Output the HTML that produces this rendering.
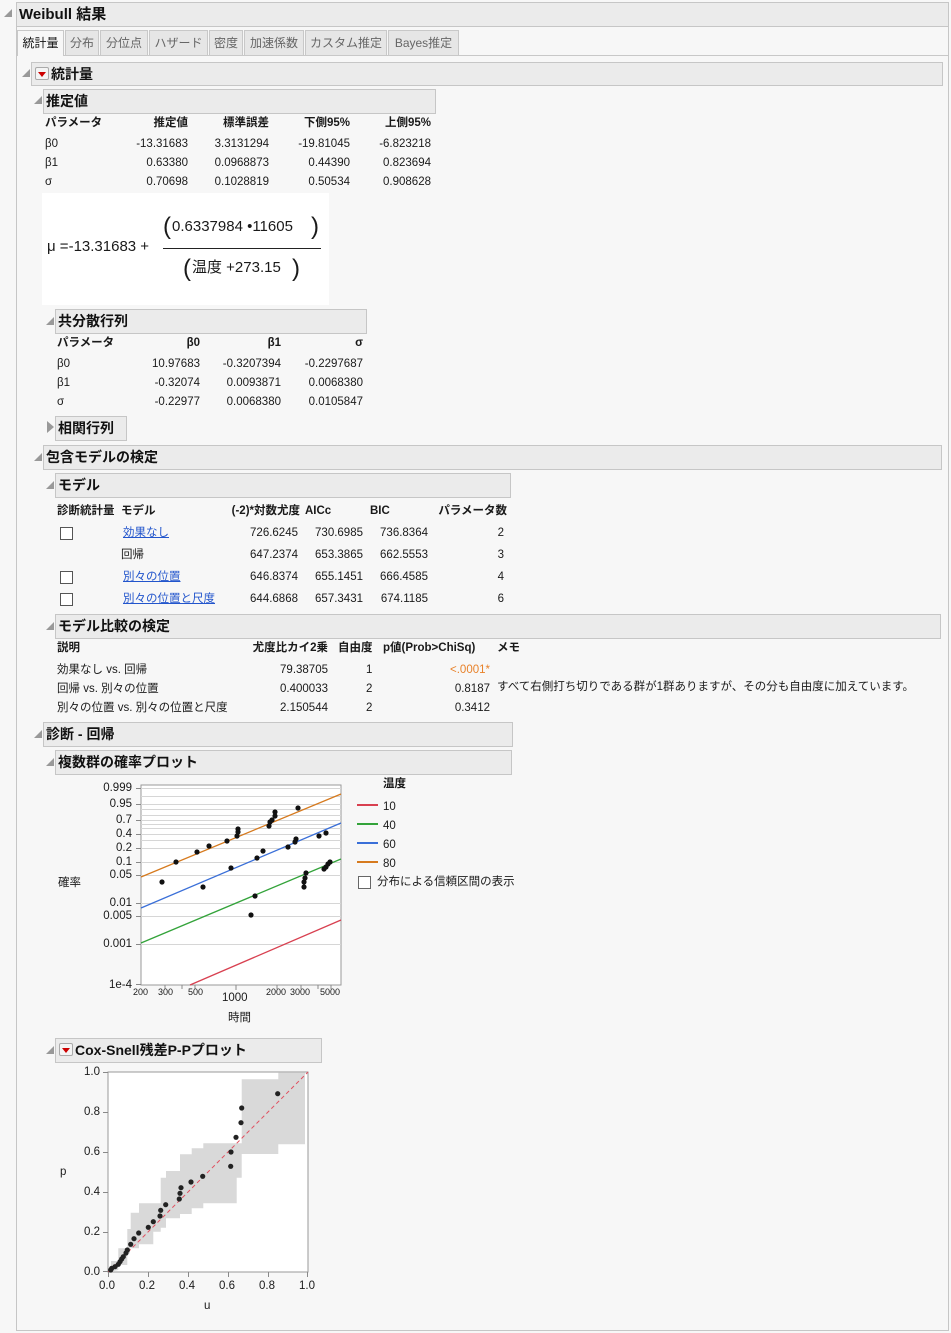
<!DOCTYPE html>
<html><head><meta charset="utf-8"><style>
*{margin:0;padding:0;box-sizing:border-box}
body{width:951px;height:1333px;background:#f7f7f7;position:relative;overflow:hidden;font-family:"Liberation Sans","Noto Sans CJK JP",sans-serif;font-size:11.5px;color:#1a1a1a}
.a{position:absolute;white-space:nowrap;line-height:14px}
.r{text-align:right}
.hd{position:absolute;background:#ebebeb;border:1px solid #c6c6c6;font-weight:bold;font-size:14px;line-height:22px;padding-left:2px;color:#111}
.tri{position:absolute;width:0;height:0;border-left:8px solid transparent;border-bottom:8px solid #999}
.b{font-weight:bold}
.tab{position:absolute;top:30px;height:25px;background:#e6e6e6;border:1px solid #c8c8c8;border-bottom:none;line-height:24px;text-align:center;color:#666;font-size:12px}
.cb{position:absolute;width:13px;height:13px;border:1px solid #555;background:#fff}
.lk{color:#2255cc;text-decoration:underline}
.menu{position:absolute;width:14px;height:13px;border:1px solid #aaa;border-radius:2px;background:#f4f4f4}
.menu:after{content:"";position:absolute;left:2px;top:4px;border-left:4px solid transparent;border-right:4px solid transparent;border-top:5px solid #c00}
</style></head><body>
<div class="tri" style="left:4px;top:9px"></div>
<div class="hd" style="left:16px;top:2px;width:933px;height:25px;font-size:15px;line-height:23px">Weibull 結果</div>
<div style="position:absolute;left:16px;top:26px;width:933px;height:1305px;border:1px solid #c6c6c6;border-top:none"></div>
<div style="position:absolute;left:17px;top:55px;width:931px;height:1px;background:#c8c8c8"></div>
<div class="tab" style="left:17px;width:47px;background:#f7f7f7;color:#111;height:26px">統計量</div>
<div class="tab" style="left:65px;width:34px">分布</div>
<div class="tab" style="left:100px;width:48px">分位点</div>
<div class="tab" style="left:149px;width:59px">ハザード</div>
<div class="tab" style="left:209px;width:34px">密度</div>
<div class="tab" style="left:244px;width:60px">加速係数</div>
<div class="tab" style="left:305px;width:82px">カスタム推定</div>
<div class="tab" style="left:388px;width:71px">Bayes推定</div>

<div class="tri" style="left:22px;top:69px"></div>
<div class="hd" style="left:31px;top:62px;width:912px;height:24px;padding-left:19px">統計量</div>
<div class="menu" style="left:35px;top:67px"></div>

<div class="tri" style="left:34px;top:96px"></div>
<div class="hd" style="left:43px;top:89px;width:393px;height:25px">推定値</div>
<div class="a b" style="left:45px;top:116px">パラメータ</div>
<div class="a b r" style="left:100px;top:116px;width:88px">推定値</div>
<div class="a b r" style="left:190px;top:116px;width:79px">標準誤差</div>
<div class="a b r" style="left:270px;top:116px;width:80px">下側95%</div>
<div class="a b r" style="left:351px;top:116px;width:80px">上側95%</div>
<div class="a" style="left:45px;top:137px">β0</div><div class="a r" style="left:100px;top:137px;width:88px">-13.31683</div><div class="a r" style="left:190px;top:137px;width:79px">3.3131294</div><div class="a r" style="left:270px;top:137px;width:80px">-19.81045</div><div class="a r" style="left:351px;top:137px;width:80px">-6.823218</div>
<div class="a" style="left:45px;top:156px">β1</div><div class="a r" style="left:100px;top:156px;width:88px">0.63380</div><div class="a r" style="left:190px;top:156px;width:79px">0.0968873</div><div class="a r" style="left:270px;top:156px;width:80px">0.44390</div><div class="a r" style="left:351px;top:156px;width:80px">0.823694</div>
<div class="a" style="left:45px;top:175px">σ</div><div class="a r" style="left:100px;top:175px;width:88px">0.70698</div><div class="a r" style="left:190px;top:175px;width:79px">0.1028819</div><div class="a r" style="left:270px;top:175px;width:80px">0.50534</div><div class="a r" style="left:351px;top:175px;width:80px">0.908628</div>

<div style="position:absolute;left:42px;top:193px;width:287px;height:112px;background:#fff"></div>
<div class="a" style="left:47px;top:238px;font-size:15px;line-height:18px">μ =-13.31683 +</div>
<div style="position:absolute;left:163px;top:248px;width:158px;height:1px;background:#222"></div>
<div class="a" style="left:163px;top:212px;font-size:24px;line-height:30px">(</div>
<div class="a" style="left:172px;top:218px;font-size:15px;line-height:18px">0.6337984 •11605</div>
<div class="a" style="left:311px;top:212px;font-size:24px;line-height:30px">)</div>
<div class="a" style="left:183px;top:254px;font-size:24px;line-height:30px">(</div>
<div class="a" style="left:192px;top:259px;font-size:15px;line-height:18px">温度 +273.15</div>
<div class="a" style="left:292px;top:254px;font-size:24px;line-height:30px">)</div>

<div class="tri" style="left:46px;top:317px"></div>
<div class="hd" style="left:55px;top:309px;width:312px;height:25px">共分散行列</div>
<div class="a b" style="left:57px;top:336px">パラメータ</div>
<div class="a b r" style="left:120px;top:336px;width:80px">β0</div><div class="a b r" style="left:201px;top:336px;width:80px">β1</div><div class="a b r" style="left:283px;top:336px;width:80px">σ</div>
<div class="a" style="left:57px;top:357px">β0</div><div class="a r" style="left:120px;top:357px;width:80px">10.97683</div><div class="a r" style="left:201px;top:357px;width:80px">-0.3207394</div><div class="a r" style="left:283px;top:357px;width:80px">-0.2297687</div>
<div class="a" style="left:57px;top:376px">β1</div><div class="a r" style="left:120px;top:376px;width:80px">-0.32074</div><div class="a r" style="left:201px;top:376px;width:80px">0.0093871</div><div class="a r" style="left:283px;top:376px;width:80px">0.0068380</div>
<div class="a" style="left:57px;top:395px">σ</div><div class="a r" style="left:120px;top:395px;width:80px">-0.22977</div><div class="a r" style="left:201px;top:395px;width:80px">0.0068380</div><div class="a r" style="left:283px;top:395px;width:80px">0.0105847</div>

<div style="position:absolute;left:47px;top:421px;border-top:6px solid transparent;border-bottom:6px solid transparent;border-left:7px solid #999"></div>
<div class="hd" style="left:55px;top:416px;width:72px;height:25px">相関行列</div>

<div class="tri" style="left:34px;top:453px"></div>
<div class="hd" style="left:43px;top:445px;width:899px;height:25px">包含モデルの検定</div>
<div class="tri" style="left:46px;top:481px"></div>
<div class="hd" style="left:55px;top:473px;width:456px;height:25px">モデル</div>
<div class="a b" style="left:57px;top:504px">診断統計量</div><div class="a b" style="left:121px;top:504px">モデル</div>
<div class="a b r" style="left:200px;top:504px;width:100px">(-2)*対数尤度</div><div class="a b" style="left:305px;top:504px">AICc</div><div class="a b" style="left:370px;top:504px">BIC</div><div class="a b r" style="left:420px;top:504px;width:87px">パラメータ数</div>
<div class="cb" style="left:60px;top:527px"></div><div class="a lk" style="left:123px;top:526px">効果なし</div>
<div class="a" style="left:121px;top:548px">回帰</div>
<div class="cb" style="left:60px;top:571px"></div><div class="a lk" style="left:123px;top:570px">別々の位置</div>
<div class="cb" style="left:60px;top:593px"></div><div class="a lk" style="left:123px;top:592px">別々の位置と尺度</div>
<div class="a r" style="left:220px;top:522px;width:78px;line-height:22px">726.6245<br>647.2374<br>646.8374<br>644.6868</div>
<div class="a r" style="left:300px;top:522px;width:63px;line-height:22px">730.6985<br>653.3865<br>655.1451<br>657.3431</div>
<div class="a r" style="left:365px;top:522px;width:63px;line-height:22px">736.8364<br>662.5553<br>666.4585<br>674.1185</div>
<div class="a r" style="left:460px;top:522px;width:44px;line-height:22px">2<br>3<br>4<br>6</div>

<div class="tri" style="left:46px;top:622px"></div>
<div class="hd" style="left:55px;top:614px;width:886px;height:25px">モデル比較の検定</div>
<div class="a b" style="left:57px;top:641px">説明</div><div class="a b r" style="left:230px;top:641px;width:98px">尤度比カイ2乗</div><div class="a b" style="left:338px;top:641px">自由度</div><div class="a b" style="left:383px;top:641px">p値(Prob&gt;ChiSq)</div><div class="a b" style="left:497px;top:641px">メモ</div>
<div class="a" style="left:57px;top:661px;line-height:19px">効果なし vs. 回帰<br>回帰 vs. 別々の位置<br>別々の位置 vs. 別々の位置と尺度</div>
<div class="a r" style="left:250px;top:661px;width:78px;line-height:19px">79.38705<br>0.400033<br>2.150544</div>
<div class="a" style="left:366px;top:661px;line-height:19px">1<br>2<br>2</div>
<div class="a r" style="left:420px;top:661px;width:70px;line-height:19px"><span style="color:#e8822a">&lt;.0001*</span><br>0.8187<br>0.3412</div>
<div class="a" style="left:497px;top:680px">すべて右側打ち切りである群が1群ありますが、その分も自由度に加えています。</div>

<div class="tri" style="left:34px;top:730px"></div>
<div class="hd" style="left:43px;top:722px;width:470px;height:25px">診断 - 回帰</div>
<div class="tri" style="left:46px;top:758px"></div>
<div class="hd" style="left:55px;top:750px;width:457px;height:25px">複数群の確率プロット</div>

<svg style="position:absolute;left:0;top:0" width="951" height="1333">
<rect x="141" y="785" width="200" height="200" fill="#fff" stroke="#999"/>
<g stroke="#d6d6d6" stroke-width="1">
<line x1="141" x2="341" y1="788.5" y2="788.5"/><line x1="141" x2="341" y1="796.5" y2="796.5"/><line x1="141" x2="341" y1="804.5" y2="804.5"/><line x1="141" x2="341" y1="809.5" y2="809.5"/><line x1="141" x2="341" y1="815.5" y2="815.5"/><line x1="141" x2="341" y1="820.5" y2="820.5"/><line x1="141" x2="341" y1="824.5" y2="824.5"/><line x1="141" x2="341" y1="828.5" y2="828.5"/><line x1="141" x2="341" y1="834.5" y2="834.5"/><line x1="141" x2="341" y1="840.5" y2="840.5"/><line x1="141" x2="341" y1="848.5" y2="848.5"/><line x1="141" x2="341" y1="862.5" y2="862.5"/><line x1="141" x2="341" y1="875.5" y2="875.5"/><line x1="141" x2="341" y1="903.5" y2="903.5"/><line x1="141" x2="341" y1="916.5" y2="916.5"/><line x1="141" x2="341" y1="944.5" y2="944.5"/>
</g>
<g stroke="#888"><line x1="141" x2="136" y1="788.5" y2="788.5"/><line x1="141" x2="136" y1="804.5" y2="804.5"/><line x1="141" x2="136" y1="820.5" y2="820.5"/><line x1="141" x2="136" y1="834.5" y2="834.5"/><line x1="141" x2="136" y1="848.5" y2="848.5"/><line x1="141" x2="136" y1="862.5" y2="862.5"/><line x1="141" x2="136" y1="875.5" y2="875.5"/><line x1="141" x2="136" y1="903.5" y2="903.5"/><line x1="141" x2="136" y1="916.5" y2="916.5"/><line x1="141" x2="136" y1="944.5" y2="944.5"/><line x1="141" x2="136" y1="984.5" y2="984.5"/>
<line x1="165" x2="165" y1="985" y2="989"/><line x1="182" x2="182" y1="985" y2="989"/><line x1="195" x2="195" y1="985" y2="989"/><line x1="236" x2="236" y1="985" y2="990"/><line x1="277" x2="277" y1="985" y2="989"/><line x1="301" x2="301" y1="985" y2="989"/><line x1="318" x2="318" y1="985" y2="989"/><line x1="331" x2="331" y1="985" y2="989"/></g>
<line x1="141" y1="877" x2="341" y2="794" stroke="#d67a1e" stroke-width="1.3"/>
<line x1="141" y1="908" x2="341" y2="823" stroke="#3a6fd8" stroke-width="1.3"/>
<line x1="141" y1="943" x2="341" y2="859" stroke="#33a33a" stroke-width="1.3"/>
<line x1="190" y1="985" x2="341" y2="920" stroke="#d84050" stroke-width="1.3"/>
<g fill="#111">
<circle cx="162" cy="882" r="2.6"/><circle cx="176" cy="862" r="2.6"/><circle cx="197" cy="852" r="2.6"/><circle cx="209" cy="846" r="2.6"/><circle cx="227" cy="841" r="2.6"/><circle cx="237" cy="836" r="2.6"/><circle cx="238" cy="832" r="2.6"/><circle cx="238" cy="829" r="2.6"/><circle cx="269" cy="826" r="2.6"/><circle cx="270" cy="822" r="2.6"/><circle cx="272" cy="820" r="2.6"/><circle cx="275" cy="816" r="2.6"/><circle cx="275" cy="812" r="2.6"/><circle cx="298" cy="808" r="2.6"/>
<circle cx="203" cy="887" r="2.6"/><circle cx="231" cy="868" r="2.6"/><circle cx="257" cy="858" r="2.6"/><circle cx="263" cy="851" r="2.6"/><circle cx="288" cy="847" r="2.6"/><circle cx="295" cy="842" r="2.6"/><circle cx="296" cy="839" r="2.6"/><circle cx="319" cy="836" r="2.6"/><circle cx="326" cy="833" r="2.6"/>
<circle cx="251" cy="915" r="2.6"/><circle cx="255" cy="896" r="2.6"/><circle cx="304" cy="887" r="2.6"/><circle cx="304" cy="882" r="2.6"/><circle cx="305" cy="878" r="2.6"/><circle cx="306" cy="873" r="2.6"/><circle cx="324" cy="869" r="2.6"/><circle cx="326" cy="867" r="2.6"/><circle cx="328" cy="864" r="2.6"/><circle cx="330" cy="862" r="2.6"/>
</g>
<line x1="357" x2="378" y1="805" y2="805" stroke="#d84050" stroke-width="2"/>
<line x1="357" x2="378" y1="824" y2="824" stroke="#33a33a" stroke-width="2"/>
<line x1="357" x2="378" y1="843" y2="843" stroke="#3a6fd8" stroke-width="2"/>
<line x1="357" x2="378" y1="862" y2="862" stroke="#d67a1e" stroke-width="2"/>

<rect x="108" y="1072" width="200" height="200" fill="#fff" stroke="#999"/>
<polygon fill="#d9d9d9" points="108.3,1272 111,1268.3 111,1261 118.3,1261 118.3,1248.3 127.3,1248.3 127.3,1229 130.7,1229 130.7,1212.7 139,1212.7 139,1203.3 160.7,1203.3 160.7,1177.7 166,1177.7 166,1171 180,1171 180,1154.3 191.7,1154.3 191.7,1148.3 203.3,1148.3 203.3,1143.3 241.7,1143.3 241.7,1079.3 278.3,1079.3 278.3,1072.7 305,1072.7 305,1144.3 278.3,1144.3 278.3,1154 241.7,1154 241.7,1177.7 236.7,1177.7 236.7,1203.3 203.3,1203.3 203.3,1208.3 191.7,1208.3 191.7,1214 180,1214 180,1218.3 166,1218.3 166,1227.7 160.7,1227.7 160.7,1231.7 153.3,1231.7 153.3,1244.3 139,1244.3 139,1248.3 130,1248.3 130,1253.3 127.3,1253.3 127.3,1265 118.3,1265 118.3,1270"/>
<line x1="108" y1="1272" x2="308" y2="1072" stroke="#e05060" stroke-dasharray="4,3"/>
<g stroke="#888"><line x1="108" x2="103" y1="1072.5" y2="1072.5"/><line x1="108" x2="103" y1="1112.5" y2="1112.5"/><line x1="108" x2="103" y1="1152.5" y2="1152.5"/><line x1="108" x2="103" y1="1192.5" y2="1192.5"/><line x1="108" x2="103" y1="1232.5" y2="1232.5"/><line x1="108" x2="103" y1="1271.5" y2="1271.5"/>
<line x1="108.5" x2="108.5" y1="1272" y2="1277"/><line x1="148.5" x2="148.5" y1="1272" y2="1277"/><line x1="188.5" x2="188.5" y1="1272" y2="1277"/><line x1="228.5" x2="228.5" y1="1272" y2="1277"/><line x1="268.5" x2="268.5" y1="1272" y2="1277"/><line x1="307.5" x2="307.5" y1="1272" y2="1277"/></g>
<g fill="#222">
<circle cx="277.7" cy="1093.7" r="2.6"/><circle cx="241.7" cy="1108" r="2.6"/><circle cx="241" cy="1122.7" r="2.6"/><circle cx="236" cy="1137.3" r="2.6"/><circle cx="231" cy="1152" r="2.6"/><circle cx="230.7" cy="1166.3" r="2.6"/><circle cx="202.7" cy="1176.3" r="2.6"/><circle cx="191" cy="1182" r="2.6"/><circle cx="181" cy="1187.7" r="2.6"/><circle cx="180" cy="1193.3" r="2.6"/><circle cx="179.3" cy="1199" r="2.6"/><circle cx="165.7" cy="1204.7" r="2.6"/><circle cx="160.7" cy="1210.3" r="2.6"/><circle cx="160" cy="1216" r="2.6"/><circle cx="153.3" cy="1221.7" r="2.6"/><circle cx="148.3" cy="1227.3" r="2.6"/><circle cx="138.7" cy="1233" r="2.6"/><circle cx="134" cy="1238.7" r="2.6"/><circle cx="130.7" cy="1244.3" r="2.6"/><circle cx="127.3" cy="1250" r="2.6"/><circle cx="126" cy="1253" r="2.6"/><circle cx="123.3" cy="1256.7" r="2.6"/><circle cx="121.7" cy="1259" r="2.6"/><circle cx="120" cy="1261.7" r="2.6"/><circle cx="118.3" cy="1264.3" r="2.6"/><circle cx="115" cy="1266.7" r="2.6"/><circle cx="111.7" cy="1268.3" r="2.6"/><circle cx="110.7" cy="1270" r="2.6"/>
</g>
</svg>
<div class="a r" style="left:90px;top:781px;width:42px">0.999</div>
<div class="a r" style="left:90px;top:797px;width:42px">0.95</div>
<div class="a r" style="left:90px;top:813px;width:42px">0.7</div>
<div class="a r" style="left:90px;top:827px;width:42px">0.4</div>
<div class="a r" style="left:90px;top:841px;width:42px">0.2</div>
<div class="a r" style="left:90px;top:855px;width:42px">0.1</div>
<div class="a r" style="left:90px;top:868px;width:42px">0.05</div>
<div class="a r" style="left:90px;top:896px;width:42px">0.01</div>
<div class="a r" style="left:90px;top:909px;width:42px">0.005</div>
<div class="a r" style="left:90px;top:937px;width:42px">0.001</div>
<div class="a r" style="left:90px;top:978px;width:42px">1e-4</div>
<div class="a" style="left:58px;top:876px">確率</div>
<div class="a" style="left:133px;top:987px;font-size:9px;line-height:10px">200</div>
<div class="a" style="left:158px;top:987px;font-size:9px;line-height:10px">300</div>
<div class="a" style="left:188px;top:987px;font-size:9px;line-height:10px">500</div>
<div class="a" style="left:266px;top:987px;font-size:9px;line-height:10px">2000</div>
<div class="a" style="left:290px;top:987px;font-size:9px;line-height:10px">3000</div>
<div class="a" style="left:320px;top:987px;font-size:9px;line-height:10px">5000</div>
<div class="a" style="left:222px;top:991px">1000</div>
<div class="a" style="left:228px;top:1011px">時間</div>
<div class="a b" style="left:383px;top:777px">温度</div>
<div class="a" style="left:383px;top:798px;line-height:19px">10<br>40<br>60<br>80</div>
<div class="cb" style="left:358px;top:876px;border-color:#666"></div>
<div class="a" style="left:377px;top:875px">分布による信頼区間の表示</div>

<div class="tri" style="left:46px;top:1046px"></div>
<div class="hd" style="left:55px;top:1038px;width:267px;height:25px;padding-left:19px">Cox-Snell残差P-Pプロット</div>
<div class="menu" style="left:59px;top:1043px"></div>
<div class="a r" style="left:60px;top:1065px;width:40px">1.0</div>
<div class="a r" style="left:60px;top:1105px;width:40px">0.8</div>
<div class="a r" style="left:60px;top:1145px;width:40px">0.6</div>
<div class="a r" style="left:60px;top:1185px;width:40px">0.4</div>
<div class="a r" style="left:60px;top:1225px;width:40px">0.2</div>
<div class="a r" style="left:60px;top:1265px;width:40px">0.0</div>
<div class="a" style="left:60px;top:1165px">p</div>
<div class="a" style="left:99px;top:1279px">0.0</div><div class="a" style="left:139px;top:1279px">0.2</div><div class="a" style="left:179px;top:1279px">0.4</div><div class="a" style="left:219px;top:1279px">0.6</div><div class="a" style="left:259px;top:1279px">0.8</div><div class="a" style="left:299px;top:1279px">1.0</div>
<div class="a" style="left:204px;top:1299px">u</div>
</body></html>
